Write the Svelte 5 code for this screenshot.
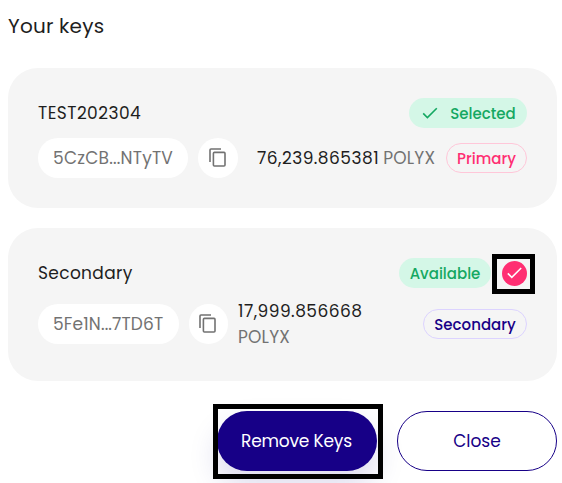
<script>
  const keys = [
    {
      name: 'TEST202304',
      address: '5CzCB...NTyTV',
      amount: '76,239.865381',
      status: 'Selected',
      type: 'Primary',
      selected: true,
    },
    {
      name: 'Secondary',
      address: '5Fe1N...7TD6T',
      amount: '17,999.856668',
      status: 'Available',
      type: 'Secondary',
      selected: false,
    },
  ];
</script>

<main>
  <h1><span>Your keys</span></h1>

  {#each keys as key}
    <section class="card" class:available={!key.selected}>
      <div class="row top">
        <span class="name">{key.name}</span>
        <div class="status" class:selected={key.selected}>
          {#if key.selected}
            <svg width="16" height="12" viewBox="0 0 16 12" fill="none" stroke="currentColor" stroke-width="1.6">
              <path d="M1.2 6.4l4.2 4.2L14.8 1.2" />
            </svg>
          {/if}
          <span>{key.status}</span>
        </div>
        {#if !key.selected}
          <button class="check" aria-label="Deselect key">
            <svg width="15" height="12" viewBox="0 0 15 12" fill="none" stroke="currentColor" stroke-width="1.5">
              <path d="M.8 6.4l4 4L14.2 1" />
            </svg>
          </button>
        {/if}
      </div>

      <div class="row details">
        <div class="address"><span>{key.address}</span></div>
        <button class="copy" aria-label="Copy address">
          <svg width="17" height="19" viewBox="0 0 17 19" fill="none" stroke="currentColor" stroke-width="1.6">
            <path d="M1 14V2Q1 1 2 1H12" />
            <rect x="4.4" y="4.4" width="11.6" height="13.6" rx="1" />
          </svg>
        </button>
        <div class="balance">
          <span class="amount">{key.amount}</span>
          <span class="unit">POLYX</span>
        </div>
        <div class="type" class:primary={key.type === 'Primary'}><span>{key.type}</span></div>
      </div>
    </section>
  {/each}

  <footer>
    <button class="btn remove"><span>Remove Keys</span></button>
    <button class="btn close"><span>Close</span></button>
  </footer>
</main>

<style>
  :global(body) {
    background: #fff;
    overflow: hidden;
  }

  main {
    box-sizing: border-box;
    width: 562px;
    height: 483px;
    padding: 11px 5px 0 8px;
    overflow: hidden;
    color: #1e1e1e;
    font-family: Poppins, Inter, sans-serif;
    font-size: 17px;
  }

  button {
    padding: 0;
    border: 0;
    font: inherit;
  }

  span {
    white-space: nowrap;
  }

  svg {
    display: block;
    flex: none;
  }

  h1 {
    margin: 0 0 27px;
    font-size: 20px;
    font-weight: 400;
    letter-spacing: 0.2px;
    line-height: 30px;
  }

  .card {
    box-sizing: border-box;
    height: 140px;
    margin-bottom: 20px;
    padding: 30px;
    border-radius: 30px;
    background: #f5f5f5;
  }

  .card.available {
    height: 153px;
    margin-bottom: 30px;
  }

  .row {
    display: flex;
    align-items: center;
  }

  .top {
    height: 30px;
    margin-bottom: 10px;
  }

  .name {
    margin-right: auto;
    letter-spacing: 0.45px;
  }

  .available .name {
    letter-spacing: 0.35px;
  }

  .status {
    display: flex;
    align-items: center;
    justify-content: center;
    width: 92px;
    height: 30px;
    border-radius: 15px;
    background: #d4f7e7;
    color: #14a862;
    font-size: 15px;
    font-weight: 500;
  }

  .status.selected {
    box-sizing: border-box;
    width: 118px;
    gap: 12px;
    padding-left: 2px;
  }

  .check {
    display: flex;
    align-items: center;
    justify-content: center;
    width: 25px;
    height: 25px;
    margin-left: 11px;
    border-radius: 50%;
    background: #ff2e72;
    color: #fff;
    position: relative;
  }

  /* highlight frames sit over the layout and take no space */
  .check::before {
    content: '';
    position: absolute;
    inset: -7px -8px -8px -10px;
    border: 5px solid #000;
  }

  .details {
    height: 40px;
  }

  .available .details {
    height: 52px;
  }

  .address {
    display: flex;
    align-items: center;
    box-sizing: border-box;
    width: 150px;
    height: 40px;
    padding-left: 15px;
    border-radius: 20px;
    background: #fff;
    color: #727272;
    letter-spacing: 0.22px;
  }

  .available .address {
    width: 141px;
    letter-spacing: 0.15px;
  }

  .copy {
    display: flex;
    align-items: center;
    justify-content: center;
    box-sizing: border-box;
    width: 40px;
    height: 40px;
    margin-left: 10px;
    padding: 0 2px 1px 0;
    border-radius: 20px;
    background: #fff;
    color: #727272;
  }

  .available .copy {
    width: 39px;
  }

  .balance {
    display: flex;
    gap: 4px;
    margin-left: 19px;
    line-height: 26px;
  }

  .available .balance {
    flex-direction: column;
    gap: 0;
    margin-left: 10px;
  }

  .amount {
    letter-spacing: 0.48px;
  }

  .unit {
    color: #727272;
    letter-spacing: 0.2px;
  }

  .type {
    box-sizing: border-box;
    display: flex;
    align-items: center;
    justify-content: center;
    width: 104px;
    height: 30px;
    margin-left: auto;
    border: 1px solid #dcd3ff;
    border-radius: 15px;
    color: #170087;
    font-size: 15px;
    font-weight: 500;
  }

  .type.primary {
    width: 81px;
    border-color: #ffc7d9;
    color: #ff2e72;
  }

  footer {
    display: flex;
    justify-content: flex-end;
    gap: 20px;
  }

  .btn {
    box-sizing: border-box;
    width: 160px;
    height: 60px;
    border-radius: 30px;
  }

  .remove {
    position: relative;
    background: #170087;
    color: #fff;
    letter-spacing: -0.2px;
    box-shadow: 0 15px 30px rgba(23, 0, 135, 0.15);
  }

  .remove span {
    margin-right: 1px;
  }

  .remove::before {
    content: '';
    position: absolute;
    inset: -7px -6px -8px -4px;
    border: 5px solid #000;
  }

  .close {
    border: 1px solid #170087;
    background: #fff;
    color: #170087;
  }
</style>
